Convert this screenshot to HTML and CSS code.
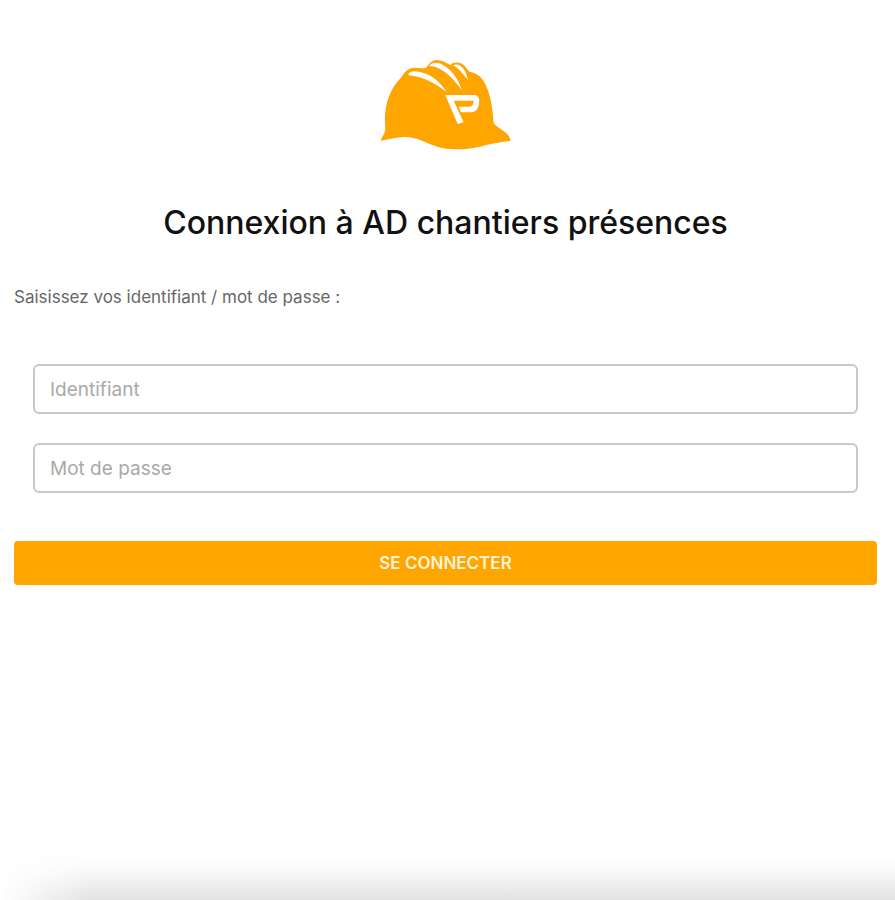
FILE: index.html
```html
<!DOCTYPE html>
<html lang="fr">
<head>
  <meta charset="utf-8">
  <meta name="viewport" content="width=device-width, initial-scale=1">
  <title>Connexion à AD chantiers présences</title>
  <link rel="stylesheet" href="styles.css">
</head>
<body>
  <main class="login">
    <svg class="logo" viewBox="3 0 450 330" aria-hidden="true">
      <path class="logo-shape" d="M32 272C37 257 47 250 46 230C40 172 58 118 92 84C101 71 110 58 125 54C140 51 152 56 168 54C176 43 184 31 199 30C216 30 229 39 242 45C250 35 266 36 278 43C289 50 291 60 299 65C316 69 330 76 339 90C361 124 367 170 371 218C377 230 398 238 409 250C418 259 423 267 420 273C385 277 361 282 330 290C284 300 236 300 204 291C170 281 151 266 117 262C86 258 58 269 32 272Z"/>
      <path class="logo-cut" d="M114 75C119 61 136 63 151 66C184 73 212 97 229 125C201 105 174 89 147 82C136 78 125 77 114 75ZM177 48C187 36 204 36 219 45C250 62 266 92 276 121C257 95 235 70 210 57C200 51 189 49 177 48ZM249 46C259 40 271 44 279 55C287 65 290 76 294 90C281 76 270 57 249 46Z"/>
      <path class="logo-cut" d="M226 135H315Q327 137 328 151Q327 185 306 187H273L266 170H298Q311 168 311 152H251L281 217L263 222Z"/>
    </svg>
    <h1 class="title">Connexion à AD chantiers présences</h1>
    <p class="intro">Saisissez vos identifiant / mot de passe :</p>
    <form class="form">
      <div class="fields">
        <input class="field" type="text" placeholder="Identifiant" aria-label="Identifiant">
        <input class="field" type="password" placeholder="Mot de passe" aria-label="Mot de passe">
      </div>
      <button class="submit" type="submit">SE CONNECTER</button>
    </form>
  </main>
  <div class="bottom-shade"></div>
</body>
</html>
```

FILE: styles.css
```css
* {
  box-sizing: border-box;
}

body {
  margin: 0;
  min-height: 100vh;
  display: flex;
  flex-direction: column;
  background: #fff;
  color: #111;
  font-family: Inter, "Liberation Sans", sans-serif;
}

.login {
  flex: 1;
  display: flex;
  flex-direction: column;
  padding: 50px 18px 0 14px;
}

.logo {
  align-self: center;
  width: 150px;
  height: 110px;
}

.logo-shape {
  fill: #ffa500;
}

.logo-cut {
  fill: #fff;
}

.title {
  margin: 43px 0 0;
  font-size: 32px;
  line-height: 40px;
  font-weight: 500;
  text-align: center;
}

.intro {
  margin: 42px 0 0;
  color: #666;
  font-size: 17px;
  line-height: 24px;
  font-weight: 400;
}

.form {
  display: flex;
  flex-direction: column;
  gap: 48px;
  margin-top: 55px;
}

.fields {
  display: flex;
  flex-direction: column;
  gap: 29px;
  padding: 0 19px;
}

.field {
  width: 100%;
  height: 50px;
  padding: 0 15px;
  border: 2px solid #c8c8c8;
  border-radius: 6px;
  background: #fff;
  color: #111;
  font: inherit;
  font-size: 19px;
}

.field::placeholder {
  color: #a9a9a9;
  opacity: 1;
}

.submit {
  height: 44px;
  padding: 0 16px;
  border: 0;
  border-radius: 4px;
  background: #ffa500;
  color: #fff2dc;
  font: inherit;
  font-size: 17px;
  font-weight: 600;
}

.bottom-shade {
  height: 48px;
  background:
    linear-gradient(to right, #fff, transparent 90px),
    linear-gradient(#fff, #fafafa 35%, #f0f0f0 65%, #e2e2e2);
}
```
